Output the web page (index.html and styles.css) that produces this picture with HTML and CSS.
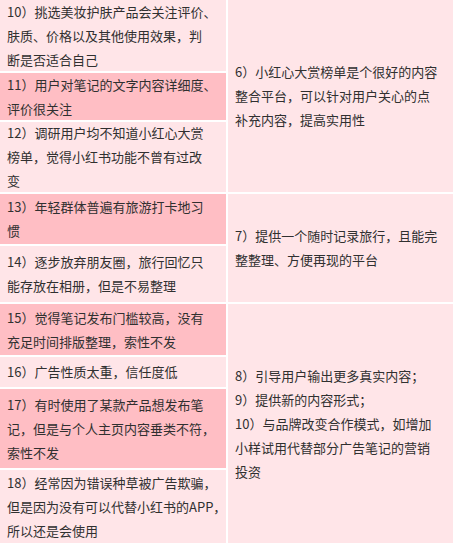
FILE: index.html
```html
<!DOCTYPE html>
<html lang="zh-CN">
<head>
<meta charset="utf-8">
<link rel="stylesheet" href="styles.css">
</head>
<body>
<div class="table">
  <div class="cell light r1">10）挑选美妆护肤产品会关注评价、<br>肤质、价格以及其他使用效果，判<br>断是否适合自己</div>
  <div class="cell light right s1">6）小红心大赏榜单是个很好的内容<br>整合平台，可以针对用户关心的点<br>补充内容，提高实用性</div>
  <div class="cell dark r2">11）用户对笔记的文字内容详细度、<br>评价很关注</div>
  <div class="cell light r3">12）调研用户均不知道小红心大赏<br>榜单，觉得小红书功能不曾有过改<br>变</div>
  <div class="cell dark r4">13）年轻群体普遍有旅游打卡地习<br>惯</div>
  <div class="cell light right s2">7）提供一个随时记录旅行，且能完<br>整整理、方便再现的平台</div>
  <div class="cell light r5">14）逐步放弃朋友圈，旅行回忆只<br>能存放在相册，但是不易整理</div>
  <div class="cell dark r6">15）觉得笔记发布门槛较高，没有<br>充足时间排版整理，索性不发</div>
  <div class="cell light right s3">8）引导用户输出更多真实内容；<br>9）提供新的内容形式；<br>10）与品牌改变合作模式，如增加<br>小样试用代替部分广告笔记的营销<br>投资</div>
  <div class="cell light r7">16）广告性质太重，信任度低</div>
  <div class="cell dark r8">17）有时使用了某款产品想发布笔<br>记，但是与个人主页内容垂类不符，<br>索性不发</div>
  <div class="cell light r9">18）经常因为错误种草被广告欺骗，<br>但是因为没有可以代替小红书的APP，<br>所以还是会使用</div>
</div>
</body>
</html>
```

FILE: styles.css
```css
html, body {
  margin: 0;
  padding: 0;
  background: #ffffff;
}

.table {
  display: grid;
  width: 453px;
  grid-template-columns: 226px 225px;
  grid-template-rows: 71px 47px 70px 50px 56px 51px 30px 79px 73px;
  gap: 2px;
  font-family: "Noto Sans CJK SC", "Noto Sans", sans-serif;
  font-size: 13px;
  line-height: 24px;
  color: #303030;
}

.cell {
  display: flex;
  align-items: center;
  padding: 0 0 0 7px;
  white-space: nowrap;
  overflow: hidden;
}

.light { background: #ffe5e8; }
.dark { background: #ffbec4; }

.r1 { grid-column: 1; grid-row: 1; }
.r2 { grid-column: 1; grid-row: 2; }
.r3 { grid-column: 1; grid-row: 3; }
.r4 { grid-column: 1; grid-row: 4; }
.r5 { grid-column: 1; grid-row: 5; }
.r6 { grid-column: 1; grid-row: 6; }
.r7 { grid-column: 1; grid-row: 7; }
.r8 { grid-column: 1; grid-row: 8; }
.r9 { grid-column: 1; grid-row: 9; }

.right { padding-left: 7px; }
.s1 { grid-column: 2; grid-row: 1 / 4; }
.s2 { grid-column: 2; grid-row: 4 / 6; }
.s3 { grid-column: 2; grid-row: 6 / 10; }
```
